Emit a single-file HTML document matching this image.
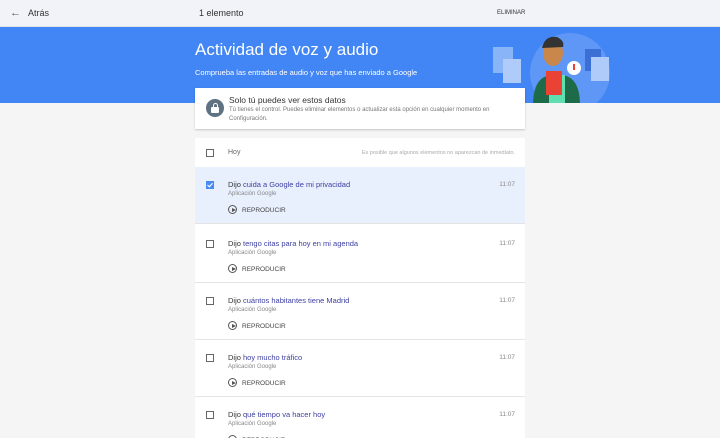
<!DOCTYPE html>
<html><head><meta charset="utf-8"><style>
*{margin:0;padding:0;box-sizing:border-box}
html,body{width:720px;height:438px;overflow:hidden}
body{background:#f5f5f5;font-family:"Liberation Sans",sans-serif;position:relative}
.top{position:absolute;left:0;top:0;width:720px;height:27px;background:#f1f3f9;border-bottom:1px solid #dfe3ea}
.t{position:absolute;font-size:9px;color:#333}
.blue{position:absolute;left:0;top:27px;width:720px;height:76px;background:#4285f4}
.card{position:absolute;left:195px;top:88px;width:330px;height:41px;background:#fff;box-shadow:0 1px 2px rgba(0,0,0,.2)}
.list{position:absolute;left:195px;top:138px;width:330px;height:300px;background:#fff}
.cb{position:absolute;left:11px;width:8px;height:8px;border:1px solid #666;background:#fff}
.item{position:absolute;left:0;width:330px;height:57px;border-bottom:1px solid #e4e4e4}
.ti{position:absolute;left:33px;top:13px;font-size:7.5px;color:#3c3fa0}
.ti span{color:#333}
.sub{position:absolute;left:33px;top:24px;font-size:6px;color:#888}
.play{position:absolute;left:33px;top:38px;width:9px;height:9px;border:1px solid #555;border-radius:50%}
.play:after{content:"";position:absolute;left:2.5px;top:1.5px;border-left:4px solid #555;border-top:2.5px solid transparent;border-bottom:2.5px solid transparent}
.rp{position:absolute;left:47px;top:40px;font-size:6.5px;color:#444}
.tm{position:absolute;right:10px;top:14px;font-size:6.5px;color:#888}
</style></head><body>
<div class="top"></div>
<div class="t" style="left:10px;top:7px;font-size:11px;color:#555">←</div>
<div class="t" style="left:28px;top:8px;font-size:9px">Atrás</div>
<div class="t" style="left:199px;top:8px;font-size:9px">1 elemento</div>
<div class="t" style="left:497px;top:10px;font-size:6px">ELIMINAR</div>
<div class="blue"></div>
<div class="t" style="left:195px;top:40px;font-size:17px;color:#fff">Actividad de voz y audio</div>
<div class="t" style="left:195px;top:68px;font-size:7.5px;color:#fff">Comprueba las entradas de audio y voz que has enviado a Google</div>
<svg style="position:absolute;left:485px;top:33px" width="135" height="70">
<circle cx="85" cy="40" r="40" fill="#5e97f6"/>
<rect x="8" y="14" width="20" height="26" fill="#8ab4f8"/><rect x="18" y="26" width="18" height="24" fill="#aecbfa"/>
<rect x="100" y="16" width="16" height="22" fill="#3b6fd6"/><rect x="106" y="24" width="18" height="24" fill="#aecbfa"/>
<path d="M48 72 Q48 45 65 42 L78 42 Q95 45 95 72Z" fill="#1e6b4a"/>
<rect x="64" y="42" width="16" height="30" fill="#5fe0b0"/>
<rect x="61" y="38" width="16" height="24" fill="#ea4335"/>
<ellipse cx="68" cy="20" rx="10" ry="13" fill="#c9874b"/>
<path d="M57 15 Q60 2 72 4 Q80 8 78 14 Z" fill="#333"/>
<circle cx="89" cy="35" r="7" fill="#fff"/><rect x="88" y="31" width="2" height="6" fill="#ea4335"/>
</svg>
<div class="card">
<div style="position:absolute;left:11px;top:11px;width:18px;height:18px;border-radius:50%;background:#5f7282"></div>
<div style="position:absolute;left:16px;top:19px;width:8px;height:6px;background:#fff;border-radius:1px"></div>
<div style="position:absolute;left:17.5px;top:15px;width:5px;height:6px;border:1.2px solid #fff;border-radius:3px 3px 0 0"></div>
<div class="t" style="left:34px;top:7px;font-size:8.5px">Solo tú puedes ver estos datos</div>
<div class="t" style="left:34px;top:18px;font-size:6px;color:#777;width:290px;line-height:9px">Tú tienes el control. Puedes eliminar elementos o actualizar esta opción en cualquier momento en Configuración.</div>
</div>
<div class="list">
<div class="cb" style="top:11px"></div>
<div class="t" style="left:33px;top:11px;font-size:7px;color:#666">Hoy</div>
<div class="t" style="right:10px;top:12px;font-size:5.5px;color:#aaa">Es posible que algunos elementos no aparezcan de inmediato.</div>
<div class="item" style="top:29px;background:#e8f0fe">
<div class="cb" style="top:14px;background:#4a8af4;border-color:#4a8af4"><svg width="8" height="8" style="position:absolute;left:-1px;top:-1px"><path d="M1.5 4 L3.3 5.8 L6.5 2.2" stroke="#fff" stroke-width="1.1" fill="none"/></svg></div>
<div class="ti"><span>Dijo</span> cuida a Google de mi privacidad</div><div class="sub">Aplicación Google</div><div class="play"></div><div class="rp">REPRODUCIR</div><div class="tm">11:07</div></div>
<div class="item" style="top:88px"><div class="cb" style="top:14px"></div><div class="ti"><span>Dijo</span> tengo citas para hoy en mi agenda</div><div class="sub">Aplicación Google</div><div class="play"></div><div class="rp">REPRODUCIR</div><div class="tm">11:07</div></div>
<div class="item" style="top:145px"><div class="cb" style="top:14px"></div><div class="ti"><span>Dijo</span> cuántos habitantes tiene Madrid</div><div class="sub">Aplicación Google</div><div class="play"></div><div class="rp">REPRODUCIR</div><div class="tm">11:07</div></div>
<div class="item" style="top:202px"><div class="cb" style="top:14px"></div><div class="ti"><span>Dijo</span> hoy mucho tráfico</div><div class="sub">Aplicación Google</div><div class="play"></div><div class="rp">REPRODUCIR</div><div class="tm">11:07</div></div>
<div class="item" style="top:259px"><div class="cb" style="top:14px"></div><div class="ti"><span>Dijo</span> qué tiempo va hacer hoy</div><div class="sub">Aplicación Google</div><div class="play"></div><div class="rp">REPRODUCIR</div><div class="tm">11:07</div></div>
</div>
</body></html>
